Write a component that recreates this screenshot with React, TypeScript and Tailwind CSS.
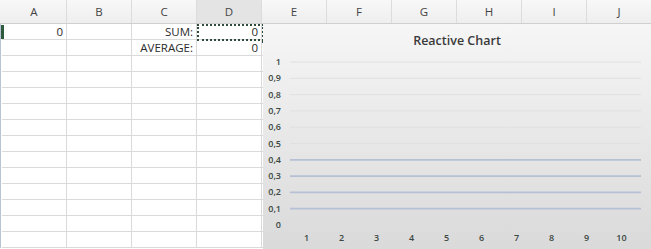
const COLS = ["A", "B", "C", "D", "E", "F", "G", "H", "I", "J"];
const ROWS = 14;

const cellText: Record<string, string> = {
  "0-0": "0",
  "0-2": "SUM:",
  "1-2": "AVERAGE:",
  "0-3": "0",
  "1-3": "0",
};

const yTicks = ["1", "0,9", "0,8", "0,7", "0,6", "0,5", "0,4", "0,3", "0,2", "0,1", "0"];

function Chart() {
  return (
    <div className="absolute left-[263px] top-[24px] w-[388px] h-[230px] bg-gradient-to-b from-[#f6f6f6] to-[#d9d9d9]">
      <div className="pt-[9px] text-center text-[12.5px] font-semibold text-[#3a3a3a] leading-[16px]">
        Reactive Chart
      </div>
      <svg className="absolute left-0 top-0" width="388" height="230">
        {yTicks.map((t, i) => {
          const y = 38 + i * 16.3;
          const blue = i >= 6 && i <= 9;
          return (
            <g key={t}>
              {i < 10 && (
                <line
                  x1="27"
                  x2="378"
                  y1={y}
                  y2={y}
                  stroke={blue ? "#b5c0d5" : "#e0e0e0"}
                  strokeWidth={blue ? 1.8 : 1}
                />
              )}
              <text
                x="18"
                y={y + 3}
                textAnchor="end"
                fontSize="9"
                fontWeight="600"
                fill="#3b4742"
                fontFamily="'Open Sans', sans-serif"
              >
                {t}
              </text>
            </g>
          );
        })}
        {Array.from({ length: 10 }, (_, i) => (
          <text
            key={i}
            x={43.5 + i * 35}
            y="217"
            textAnchor="middle"
            fontSize="9"
            fontWeight="600"
            fill="#3b4742"
            fontFamily="'Open Sans', sans-serif"
          >
            {i + 1}
          </text>
        ))}
      </svg>
    </div>
  );
}

export default function App() {
  return (
    <div className="relative w-[651px] h-[249px] overflow-hidden bg-white font-['Open_Sans',sans-serif] text-[11.5px] text-[#2b2b2b]">
      {/* column headers */}
      <div className="flex h-[24px] bg-gradient-to-b from-[#f8f8f8] to-[#eeeeee] border-b border-[#cfcfcf]">
        <div className="w-[2px] shrink-0" />
        {COLS.map((c) => (
          <div
            key={c}
            className={`w-[65px] shrink-0 flex items-center justify-center border-r border-[#dcdcdc] text-[#444] ${
              c === "D" ? "bg-[#e4e4e4]" : ""
            }`}
          >
            {c}
          </div>
        ))}
      </div>
      {/* grid */}
      <div className="flex">
        <div className="w-[2px] shrink-0 border-l border-[#b9c4d3] relative">
          <div className="absolute left-0 top-[1px] w-[3px] h-[14px] bg-[#2d5b3d]" />
        </div>
        <div className="flex flex-col">
          {Array.from({ length: ROWS }, (_, r) => (
            <div key={r} className="flex h-[16px]">
              {COLS.map((c, ci) => (
                <div
                  key={c}
                  className="w-[65px] shrink-0 border-r border-b border-[#dadada] px-[3px] flex items-center justify-end leading-none font-medium"
                >
                  {cellText[`${r}-${ci}`] ?? ""}
                </div>
              ))}
            </div>
          ))}
        </div>
      </div>
      {/* selection on D1 */}
      <div className="absolute left-[197px] top-[24px] w-[67px] h-[17px] border-2 border-dotted border-[#2f4a3a]">
        <div className="absolute right-[-4px] bottom-[-4px] w-[4px] h-[4px] bg-[#2f4a3a]" />
      </div>
      <Chart />
    </div>
  );
}
